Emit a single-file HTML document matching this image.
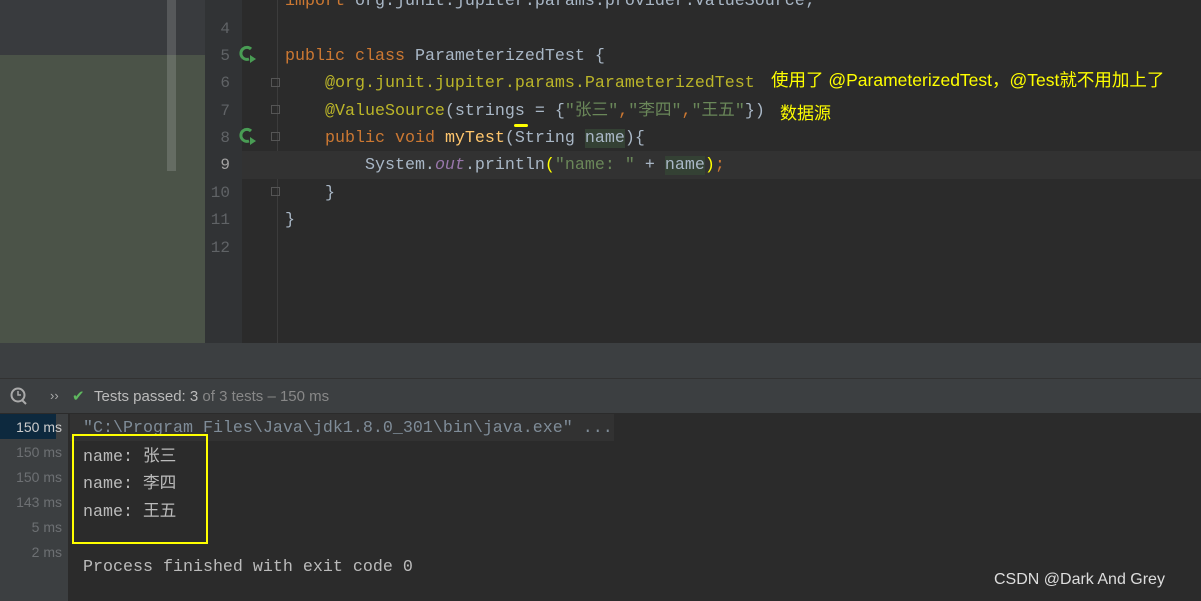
<!DOCTYPE html>
<html><head><meta charset="utf-8"><style>
body{margin:0;width:1201px;height:601px;overflow:hidden;background:#2b2b2b;position:relative;font-family:"Liberation Mono","Noto Sans CJK SC",monospace}
div{position:absolute}
.m{font-size:16.67px;white-space:pre;line-height:27px}
.ln{left:205px;width:25px;text-align:right;color:#606366;font-size:16px}
.k{color:#cc7832}.a{color:#bbb529}.s{color:#6a8759}.t{color:#a9b7c6}.f{color:#ffc66d}.o{color:#9876aa;font-style:italic}
.ui{font-family:"Liberation Sans","Noto Sans CJK SC",sans-serif}
.ms{left:0;width:62px;text-align:right;color:#6d7073;font-size:14px;font-family:"Liberation Sans",sans-serif}
.fold{left:271px;width:9px;height:9px;border:1px solid #555;box-sizing:border-box}
</style></head><body>
<div style="left:0;top:0;width:205px;height:55px;background:#393b3e"></div>
<div style="left:0;top:55px;width:205px;height:288px;background:#4b5348"></div>
<div style="left:167px;top:0;width:9px;height:171px;background:rgba(255,255,255,.15)"></div>
<div style="left:205px;top:0;width:37px;height:343px;background:#313335"></div>
<div style="left:277px;top:0;width:1px;height:343px;background:#3c3c3c"></div>
<div style="left:242px;top:151px;width:959px;height:28px;background:#323232"></div>
<div class="m k" style="left:285px;top:-12px">import <span class="t">org.junit.jupiter.params.provider.ValueSource;</span></div>
<div class="m ln" style="top:16px">4</div><div class="m ln" style="top:43px">5</div><div class="m ln" style="top:70px">6</div><div class="m ln" style="top:98px">7</div><div class="m ln" style="top:125px">8</div><div class="m ln" style="top:152px;color:#a4a3a3">9</div><div class="m ln" style="top:180px">10</div><div class="m ln" style="top:207px">11</div><div class="m ln" style="top:235px">12</div>
<div class="fold" style="top:78px"></div><div class="fold" style="top:105px"></div><div class="fold" style="top:132px"></div><div class="fold" style="top:187px"></div>
<svg style="position:absolute;left:238px;top:45px" width="20" height="20" viewBox="0 0 20 20"><path d="M13 4A6 6 0 1 0 11 14" stroke="#499c54" stroke-width="3" fill="none"/><path d="M5 9l2 2 4-4" stroke="#2b2b2b" stroke-width="1.5" fill="none"/><path d="M12 10l6 4-6 4z" fill="#499c54"/></svg>
<svg style="position:absolute;left:238px;top:127px" width="20" height="20" viewBox="0 0 20 20"><path d="M13 4A6 6 0 1 0 11 14" stroke="#499c54" stroke-width="3" fill="none"/><path d="M5 9l2 2 4-4" stroke="#2b2b2b" stroke-width="1.5" fill="none"/><path d="M12 10l6 4-6 4z" fill="#499c54"/></svg>
<div class="m" style="left:285px;top:43px"><span class="k">public class </span><span class="t">ParameterizedTest {</span></div>
<div class="m" style="left:285px;top:70px">    <span class="a">@org.junit.jupiter.params.ParameterizedTest</span></div>
<div class="m" style="left:285px;top:98px">    <span class="a">@ValueSource</span><span class="t">(strings = {</span><span class="s">"张三"</span><span class="k">,</span><span class="s">"李四"</span><span class="k">,</span><span class="s">"王五"</span><span class="t">})</span></div>
<div class="m" style="left:285px;top:125px">    <span class="k">public void </span><span class="f">myTest</span><span class="t">(String <span style="background:#344134">name</span>){</span></div>
<div class="m t" style="left:285px;top:152px">        System.<span class="o">out</span>.println<span style="color:#ff0">(</span><span class="s">"name: "</span> + <span style="background:#344134">name</span><span style="color:#ff0">)</span><span class="k">;</span></div>
<div class="m t" style="left:285px;top:180px">    }</div>
<div class="m t" style="left:285px;top:207px">}</div>
<div style="left:514px;top:124px;width:14px;height:3px;background:#ff0;border-radius:2px"></div>
<div class="ui" style="left:771px;top:67px;color:#ff0;font-size:17.5px">使用了 @ParameterizedTest，@Test就不用加上了</div>
<div class="ui" style="left:780px;top:99px;color:#ff0;font-size:17px">数据源</div>
<div style="left:0;top:343px;width:1201px;height:35px;background:#3c3f41;border-bottom:1px solid #323232"></div>
<div style="left:0;top:379px;width:1201px;height:34px;background:#3c3f41;border-bottom:1px solid #2b2b2b"></div>
<svg style="position:absolute;left:9px;top:386px" width="22" height="22" viewBox="0 0 22 22"><circle cx="9" cy="9" r="6.5" stroke="#aaa" stroke-width="2" fill="none"/><path d="M9 5v4h3" stroke="#aaa" stroke-width="1.5" fill="none"/><path d="M13 14l4 4" stroke="#aaa" stroke-width="2"/></svg>
<div class="ui" style="left:50px;top:388px;color:#aaa;font-size:13px">››</div>
<div class="ui" style="left:72px;top:387px;color:#5fb85f;font-size:15px">✔</div>
<div class="ui" style="left:94px;top:388px;font-size:15px;color:#bbb">Tests passed: 3 <span style="color:#888">of 3 tests – 150 ms</span></div>
<div style="left:0;top:414px;width:68px;height:187px;background:#3c3f41"></div>
<div style="left:0;top:414px;width:56px;height:25px;background:#0d293e"></div>
<div class="ms" style="top:419px;color:#ccc">150 ms</div><div class="ms" style="top:444px">150 ms</div><div class="ms" style="top:469px">150 ms</div><div class="ms" style="top:494px">143 ms</div><div class="ms" style="top:519px">5 ms</div><div class="ms" style="top:544px">2 ms</div>
<div style="left:70px;top:414px;width:544px;height:27px;background:#323232"></div>
<div class="m" style="left:83px;top:415px;color:#7f8c98">"C:\Program Files\Java\jdk1.8.0_301\bin\java.exe" ...</div>
<div class="m" style="left:83px;top:444px;color:#bbb">name: 张三</div>
<div class="m" style="left:83px;top:471px;color:#bbb">name: 李四</div>
<div class="m" style="left:83px;top:499px;color:#bbb">name: 王五</div>
<div class="m" style="left:83px;top:554px;color:#bbb">Process finished with exit code 0</div>
<div style="left:72px;top:434px;width:132px;height:106px;border:2px solid #ff0"></div>
<div class="ui" style="left:994px;top:571px;color:#ddd;font-size:16px">CSDN @Dark And Grey</div>
</body></html>
